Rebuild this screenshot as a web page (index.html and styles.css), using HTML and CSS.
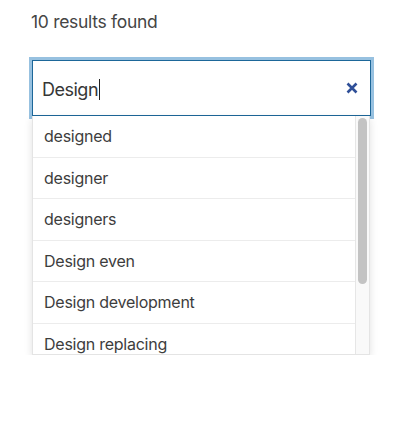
FILE: index.html
```html
<!DOCTYPE html>
<html lang="en">
<head>
<meta charset="utf-8">
<title>Search</title>
<link rel="stylesheet" href="styles.css">
</head>
<body>
<div class="page">
  <p class="count">10 results found</p>
  <div class="search">
    <div class="field"><span class="value">Design</span><span class="caret"></span></div>
    <button class="clear" aria-label="Clear">
      <svg width="12" height="12" viewBox="0 0 12 12"><path d="M1.5 1.5 L10.5 10.5 M10.5 1.5 L1.5 10.5" stroke="#2f4f98" stroke-width="2.6" stroke-linecap="butt" fill="none"/></svg>
    </button>
  </div>
  <div class="dropdown">
    <ul class="results">
      <li>designed</li>
      <li>designer</li>
      <li>designers</li>
      <li>Design even</li>
      <li>Design development</li>
      <li>Design replacing</li>
    </ul>
    <div class="scrollbar"><div class="thumb"></div></div>
  </div>
</div>
</body>
</html>
```
FILE: styles.css
```css
html, body {
  margin: 0;
  padding: 0;
  background: #ffffff;
}
.page {
  padding: 10px 0 0 32px;
  font-family: Inter, "Open Sans", sans-serif;
}
.count {
  margin: 0 0 0 -1px;
  font-size: 17.5px;
  line-height: 24px;
  color: #454545;
  letter-spacing: -0.3px;
}
.search {
  margin-top: 26px;
  width: 339px;
  height: 56px;
  box-sizing: border-box;
  border: 1px solid #1d6799;
  box-shadow: 0 0 0 3px #97c1e0;
  display: flex;
  align-items: center;
  padding: 0 12px 0 9px;
  background: #fff;
}
.field {
  flex: 1;
  display: flex;
  align-items: center;
  font-size: 18px;
  color: #363636;
  letter-spacing: -0.5px;
  padding-top: 2px;
}
.caret {
  display: inline-block;
  width: 1.3px;
  height: 21px;
  background: #222;
  margin-left: 1px;
}
.clear {
  border: 0;
  background: none;
  padding: 0;
  width: 12px;
  height: 12px;
  display: flex;
}
.dropdown {
  display: flex;
  width: 338px;
  height: 239px;
  box-sizing: border-box;
  background: #fff;
  border: 1px solid #e4e4e4;
  border-top: 0;
  box-shadow: 0 3px 8px rgba(0, 0, 0, 0.12);
  position: relative;
  overflow: hidden;
}
.results {
  flex: 1;
  list-style: none;
  margin: 0;
  padding: 0;
  overflow: hidden;
}
.results li {
  padding: 12px 11px;
  font-size: 16px;
  line-height: 16.5px;
  color: #3d3d3d;
  border-bottom: 1px solid #ececec;
  letter-spacing: -0.25px;
}
.scrollbar {
  width: 14px;
  flex: none;
  background: #f9f9f9;
  border-left: 1px solid #e6e6e6;
  padding: 2px 2px 0 2px;
  box-sizing: border-box;
}
.thumb {
  height: 166px;
  border-radius: 5px;
  background: #c3c3c3;
}
```
